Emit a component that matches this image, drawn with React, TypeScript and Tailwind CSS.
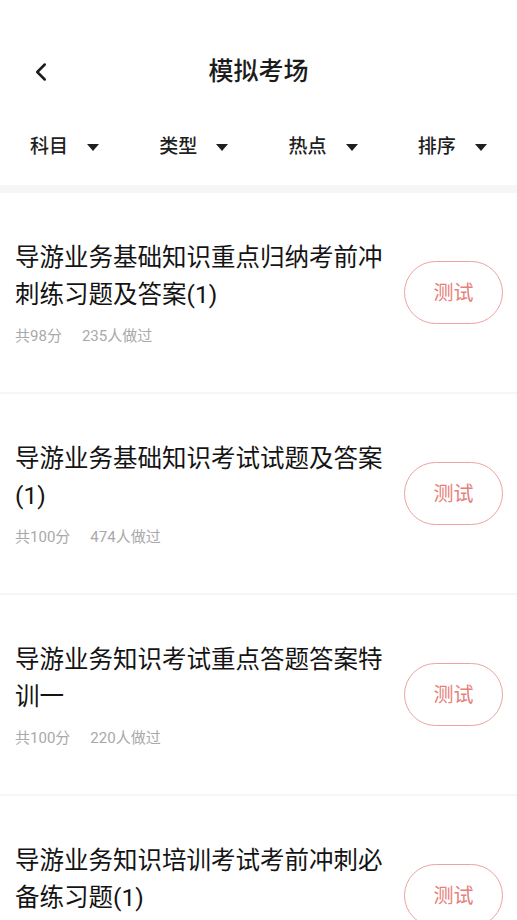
import { ChevronLeft } from "lucide-react";

const filters = ["科目", "类型", "热点", "排序"];

const papers = [
  { title: "导游业务基础知识重点归纳考前冲刺练习题及答案(1)", score: 98, count: 235 },
  { title: "导游业务基础知识考试试题及答案(1)", score: 100, count: 474 },
  { title: "导游业务知识考试重点答题答案特训一", score: 100, count: 220 },
  { title: "导游业务知识培训考试考前冲刺必备练习题(1)", score: 100, count: 198 },
];

const font = { fontFamily: 'Roboto, "Noto Sans CJK SC", "Noto Sans", sans-serif' };

export default function App() {
  return (
    <div className="h-[920px] w-[517px] overflow-hidden bg-[#f6f6f6]" style={font}>
      {/* Header */}
      <header className="bg-white pt-[44px] pb-[13px]">
        <div className="relative flex h-[56px] items-center justify-center">
          <button className="absolute left-[26px] top-1/2 -translate-y-1/2 text-[#1c1c1c]">
            <ChevronLeft className="h-[30px] w-[30px]" strokeWidth={2} />
          </button>
          <h1 className="text-[25px] font-medium text-[#1c1c1c]">模拟考场</h1>
        </div>

        {/* Filters */}
        <div className="mt-[22px] grid h-[50px] grid-cols-4">
          {filters.map((f) => (
            <div key={f} className="flex items-center justify-center gap-[19px]">
              <span className="text-[19px] font-medium text-[#1f1f1f]">{f}</span>
              <svg width="12" height="7" viewBox="0 0 12 7">
                <polygon points="0,0 12,0 6,7" fill="#1f1f1f" />
              </svg>
            </div>
          ))}
        </div>
      </header>

      {/* Paper list */}
      <div className="mt-[8px] flex flex-col gap-[2px]">
        {papers.map((p) => (
          <div key={p.title} className="flex h-[199px] items-center bg-white pl-[15px] pr-[14px]">
            <div className="flex-1">
              <p className="max-w-[375px] text-[24.5px] leading-[37px] text-[#141414]">{p.title}</p>
              <div className="mt-[13px] flex gap-[20px] text-[15px] leading-[20px] text-[#a9a9a9]">
                <span>共{p.score}分</span>
                <span>{p.count}人做过</span>
              </div>
            </div>
            <button className="flex h-[63px] w-[99px] shrink-0 items-center justify-center rounded-full border-[1.5px] border-[#eba4a1] text-[20px] text-[#e57f7a]">
              测试
            </button>
          </div>
        ))}
      </div>
    </div>
  );
}
